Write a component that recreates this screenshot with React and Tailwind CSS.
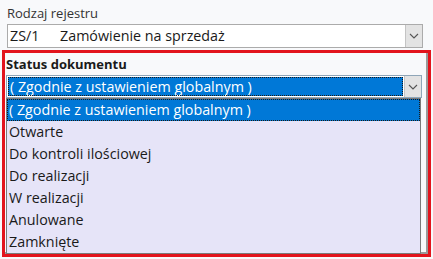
const font = { fontFamily: '"Open Sans", "Noto Sans", sans-serif' };

const statuses = [
  "( Zgodnie z ustawieniem globalnym )",
  "Otwarte",
  "Do kontroli ilościowej",
  "Do realizacji",
  "W realizacji",
  "Anulowane",
  "Zamknięte",
];

function Chevron() {
  return (
    <svg width="10" height="6" viewBox="0 0 10 6" fill="none">
      <path d="M1 1l4 4 4-4" stroke="#555" strokeWidth="1.1" />
    </svg>
  );
}

function ArrowButton() {
  return (
    <div className="w-[17px] shrink-0 self-stretch flex items-center justify-center bg-[#e3e3e3] border-l border-[#c4c4c4]">
      <Chevron />
    </div>
  );
}

export default function App() {
  return (
    <div className="w-[433px] h-[259px] bg-[#f8f9fb] overflow-hidden text-[#1a1a1a]" style={font}>
      <div className="pl-[7px] pt-[4px] text-[13px] leading-[18px] text-[#333]">Rodzaj rejestru</div>

      <div className="ml-[7px] mt-[2px] w-[416px] h-[24px] flex items-center bg-white border border-[#ababab] text-[14.3px] leading-[20px]">
        <span className="shrink-0 pl-[2px] w-[52px]">ZS/1</span>
        <span className="flex-1">Zamówienie na sprzedaż</span>
        <ArrowButton />
      </div>

      <div className="ml-[2px] mt-[2px] w-[429px] h-[207px] border-[3px] border-[#e2141d] shadow-[inset_-2px_-2px_0_#9a9a9a]">
        <div className="pl-[1px] pt-[2px] text-[13px] leading-[18px] font-bold">Status dokumentu</div>

        <div className="ml-[1px] mt-[2px] w-[416px] h-[23px] flex items-stretch bg-white border border-[#8fa6b8]">
          <div className="flex-1 m-[1px] flex items-center bg-[#0078d7] outline-1 outline-dotted outline-[#1a1a1a] -outline-offset-1 text-white text-[14.3px] leading-[20px] pl-[2px]">
            ( Zgodnie z ustawieniem globalnym )
          </div>
          <ArrowButton />
        </div>

        <ul className="ml-[1px] w-[415px] h-[156px] bg-[#e6e4f8] border border-[#7a7a7a] text-[14.3px]">
          {statuses.map((s, i) => (
            <li
              key={s}
              className={
                i === 0
                  ? "h-[22px] flex items-center pl-[2px] bg-[#0078d7] text-white outline-1 outline-dotted outline-[#1a1a1a] -outline-offset-1"
                  : "h-[22px] flex items-center pl-[2px]"
              }
            >
              {s}
            </li>
          ))}
        </ul>
      </div>
    </div>
  );
}
